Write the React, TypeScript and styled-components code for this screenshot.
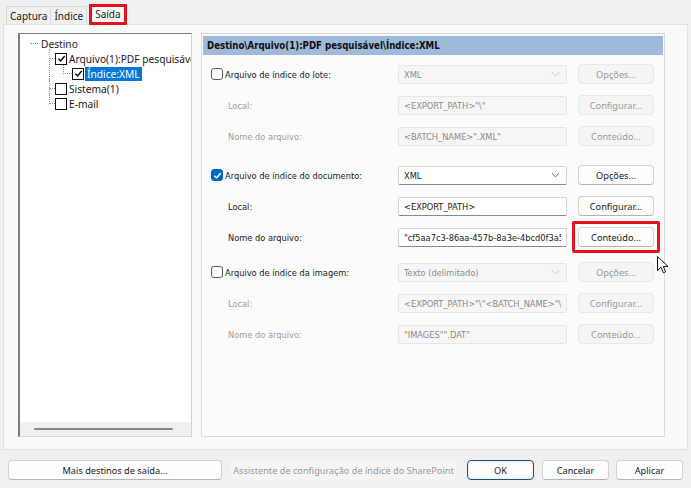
import React from "react";
import styled, { createGlobalStyle, css } from "styled-components";

const GlobalStyle = createGlobalStyle`
  html, body { margin: 0; padding: 0; background: #f0f0f0; }
  body { font-family: "Noto Sans", "Open Sans", sans-serif; font-size: 10px; color: #1a1a1a; }
  * { box-sizing: border-box; }
  ul { list-style: none; margin: 0; padding: 0; }
`;

const Window = styled.div`
  position: relative;
  width: 691px;
  height: 488px;
  display: flex;
  flex-direction: column;
  background: #f0f0f0;
  overflow: hidden;
`;

/* ---------- Tabs ---------- */
const TabStrip = styled.div`
  height: 24px;
  display: flex;
  align-items: flex-end;
  padding-left: 6px;
  position: relative;
  z-index: 2;
`;

const Tab = styled.div<{ $active?: boolean }>`
  height: 18px;
  padding: 0 3px;
  display: flex;
  align-items: center;
  font-size: 10px;
  color: #1a1a1a;
  border: 1px solid #dadada;
  border-bottom: none;
  margin-right: -1px;
  background: #f0f0f0;
  ${(p) =>
    p.$active &&
    css`
      height: 21px;
      margin: 0 0 -1px 3px;
      padding: 0 3px 1px;
      background: #f9f9f9;
      border: 3px solid #e8101c;
      border-radius: 1px;
    `}
`;

const TabPage = styled.div`
  margin: 0 3px;
  height: 426px;
  background: #f9f9f9;
  border: 1px solid #e2e2e2;
  display: grid;
  grid-template-columns: 174px 464px;
  column-gap: 9px;
  padding: 8px 0 12px 14px;
`;

/* ---------- Tree ---------- */
const TreeBox = styled.div`
  background: #ffffff;
  border: 1px solid #d4d4d4;
  border-left: 2px solid #7d7d7d;
  border-top: 1px solid #7d7d7d;
  display: flex;
  flex-direction: column;
  overflow: hidden;
`;

const TreeContent = styled.div`
  flex: 1;
  padding-top: 2px;
  overflow: hidden;
`;

const HScroll = styled.div`
  height: 14px;
  background: #f0f0f0;
  display: flex;
  align-items: center;
  padding-left: 14px;
`;

const HThumb = styled.div`
  width: 139px;
  height: 2px;
  border-radius: 1px;
  background: #878787;
`;

const RootRow = styled.div`
  height: 15px;
  display: flex;
  align-items: center;
  padding-left: 10px;
  white-space: nowrap;
  font-size: 10.2px;
`;

const RootLine = styled.span`
  width: 8px;
  border-bottom: 1px dotted #9a9a9a;
  margin-right: 3px;
`;

const NodeList = styled.ul<{ $indent: number }>`
  margin-left: ${(p) => p.$indent}px;
`;

const Node = styled.li<{ $last?: boolean; $pad: number }>`
  position: relative;
  padding-left: ${(p) => p.$pad}px;
  &::before {
    content: "";
    position: absolute;
    left: 0;
    top: -2px;
    height: ${(p) => (p.$last ? "9.5px" : "calc(100% + 2px)")};
    border-left: 1px dotted #9a9a9a;
  }
  &::after {
    content: "";
    position: absolute;
    left: 0;
    top: 7px;
    width: ${(p) => p.$pad}px;
    border-top: 1px dotted #9a9a9a;
  }
`;

const NodeRow = styled.div`
  height: 15px;
  display: flex;
  align-items: center;
  white-space: nowrap;
  font-size: 10.2px;
`;

const TreeCheck = styled.span`
  width: 12px;
  height: 12px;
  flex: none;
  border: 1.5px solid #111;
  background: #fff;
  display: inline-flex;
  align-items: center;
  justify-content: center;
  position: relative;
  z-index: 1;
`;

const NodeLabel = styled.span<{ $selected?: boolean }>`
  margin-left: ${(p) => (p.$selected ? "1px" : "2px")};
  padding: ${(p) => (p.$selected ? "0 2px" : "0")};
  line-height: 14px;
  ${(p) =>
    p.$selected &&
    css`
      background: #0078d7;
      color: #ffffff;
    `}
`;

/* ---------- Right panel ---------- */
const Panel = styled.div`
  background: #fbfbfb;
  border: 1px solid #dadada;
  padding: 2px 1px;
  display: flex;
  flex-direction: column;
  font-family: "DejaVu Sans Condensed", "DejaVu Sans", sans-serif;
  font-size: 9.2px;
`;

const PanelHeader = styled.div`
  height: 19px;
  background: #9fb9db;
  display: flex;
  align-items: center;
  padding-left: 4px;
  font-weight: bold;
  font-size: 9.6px;
  color: #0f0f0f;
`;

const Section = styled.div<{ $top: number }>`
  margin-top: ${(p) => p.$top}px;
  display: flex;
  flex-direction: column;
  gap: 11px;
`;

const Row = styled.div`
  display: grid;
  grid-template-columns: 184px 169px 76px;
  column-gap: 11px;
  align-items: center;
  height: 20px;
`;

const RowLabel = styled.div<{ $indent?: boolean; $disabled?: boolean }>`
  display: flex;
  align-items: center;
  padding-left: ${(p) => (p.$indent ? "25px" : "8px")};
  color: ${(p) => (p.$disabled ? "#9b9b9b" : "#1a1a1a")};
  white-space: nowrap;
`;

const WinCheck = styled.span<{ $checked?: boolean }>`
  width: 12px;
  height: 12px;
  margin-right: 2px;
  border-radius: 3px;
  border: 1px solid ${(p) => (p.$checked ? "#0067c0" : "#5c5c5c")};
  background: ${(p) => (p.$checked ? "#0067c0" : "#fdfdfd")};
  display: inline-flex;
  align-items: center;
  justify-content: center;
`;

const Field = styled.div<{ $disabled?: boolean }>`
  height: 19px;
  display: flex;
  align-items: center;
  padding: 0 5px;
  overflow: hidden;
  white-space: nowrap;
  border-radius: 2px;
  ${(p) =>
    p.$disabled
      ? css`
          background: #f6f6f6;
          border: 1px solid #e6e6e6;
          color: #8a8a8a;
        `
      : css`
          background: #ffffff;
          border: 1px solid #d2d2d2;
          border-bottom-color: #8a8a8a;
          color: #1a1a1a;
        `}
`;

const FieldText = styled.span`
  flex: 1;
  overflow: hidden;
`;

const Chevron = styled.svg`
  flex: none;
  margin-right: 1px;
`;

const Button = styled.button<{ $disabled?: boolean }>`
  width: 76px;
  height: 20px;
  padding: 0;
  border-radius: 4px;
  font-family: "Noto Sans", "Open Sans", sans-serif;
  font-size: 9.2px;
  cursor: default;
  ${(p) =>
    p.$disabled
      ? css`
          background: #f5f5f5;
          border: 1px solid #e8e8e8;
          color: #9a9a9a;
        `
      : css`
          background: #fdfdfd;
          border: 1px solid #d3d3d3;
          border-bottom-color: #b4b4b4;
          color: #1a1a1a;
        `}
`;

const HighlightFrame = styled.div`
  margin: -6px;
  padding: 3px;
  border: 3px solid #e8101c;
  border-radius: 2px;
  display: flex;
`;

/* ---------- Footer ---------- */
const Footer = styled.div`
  flex: 1;
  display: flex;
  align-items: flex-start;
  padding: 10px 0 0 8px;
`;

const FooterButton = styled.button<{ $w: number; $gap: number; $variant?: "default" | "disabled" }>`
  width: ${(p) => p.$w}px;
  margin-left: ${(p) => p.$gap}px;
  height: 20px;
  border-radius: 4px;
  font-family: "Noto Sans", "Open Sans", sans-serif;
  font-size: 9.2px;
  white-space: nowrap;
  padding: 0;
  background: #fdfdfd;
  border: 1px solid #d3d3d3;
  border-bottom-color: #b4b4b4;
  color: #1a1a1a;
  ${(p) =>
    p.$variant === "default" &&
    css`
      border: 1px solid #1f4f7e;
      box-shadow: inset 0 0 0 1px #e8f0f8;
    `}
  ${(p) =>
    p.$variant === "disabled" &&
    css`
      background: #f5f5f5;
      border: 1px solid #f5f5f5;
      color: #9a9a9a;
    `}
`;

const Cursor = styled.svg`
  position: absolute;
  left: 657px;
  top: 256px;
  pointer-events: none;
`;

const CheckMark = ({ color, size = 9 }: { color: string; size?: number }) => (
  <svg width={size} height={size} viewBox="0 0 10 10">
    <path d="M1.5 5.2 L4 7.6 L8.6 2.2" fill="none" stroke={color} strokeWidth="1.6" />
  </svg>
);

const ChevronDown = ({ disabled }: { disabled?: boolean }) => (
  <Chevron width="9" height="6" viewBox="0 0 9 6">
    <path d="M0.8 1 L4.5 4.8 L8.2 1" fill="none" stroke={disabled ? "#c8c8c8" : "#6a6a6a"} strokeWidth="1" />
  </Chevron>
);

type RowSpec = {
  label: string;
  kind: "check" | "sub";
  checked?: boolean;
  disabled?: boolean;
  value: string;
  select?: boolean;
  button: string;
  highlight?: boolean;
};

const sections: { top: number; rows: RowSpec[] }[] = [
  {
    top: 9,
    rows: [
      { label: "Arquivo de índice do lote:", kind: "check", value: "XML", select: true, button: "Opções...", disabled: true },
      { label: "Local:", kind: "sub", value: '<EXPORT_PATH>"\\"', button: "Configurar...", disabled: true },
      { label: "Nome do arquivo:", kind: "sub", value: '<BATCH_NAME>".XML"', button: "Conteúdo...", disabled: true },
    ],
  },
  {
    top: 19,
    rows: [
      { label: "Arquivo de índice do documento:", kind: "check", checked: true, value: "XML", select: true, button: "Opções..." },
      { label: "Local:", kind: "sub", value: "<EXPORT_PATH>", button: "Configurar..." },
      { label: "Nome do arquivo:", kind: "sub", value: '"cf5aa7c3-86aa-457b-8a3e-4bcd0f3a5f1e"', button: "Conteúdo...", highlight: true },
    ],
  },
  {
    top: 15,
    rows: [
      { label: "Arquivo de índice da imagem:", kind: "check", value: "Texto (delimitado)", select: true, button: "Opções...", disabled: true },
      { label: "Local:", kind: "sub", value: '<EXPORT_PATH>"\\"<BATCH_NAME>"\\"', button: "Configurar...", disabled: true },
      { label: "Nome do arquivo:", kind: "sub", value: '"IMAGES"".DAT"', button: "Conteúdo...", disabled: true },
    ],
  },
];

export default function App() {
  return (
    <>
      <GlobalStyle />
      <Window>
        <TabStrip>
          <Tab>Captura</Tab>
          <Tab>Índice</Tab>
          <Tab $active>Saída</Tab>
        </TabStrip>
        <TabPage>
          <TreeBox>
            <TreeContent>
              <RootRow>
                <RootLine />
                <span>Destino</span>
              </RootRow>
              <NodeList $indent={29}>
                <Node $pad={6}>
                  <NodeRow>
                    <TreeCheck>
                      <CheckMark color="#111" />
                    </TreeCheck>
                    <NodeLabel>Arquivo(1):PDF pesquisável</NodeLabel>
                  </NodeRow>
                  <NodeList $indent={8}>
                    <Node $pad={9} $last>
                      <NodeRow>
                        <TreeCheck>
                          <CheckMark color="#111" />
                        </TreeCheck>
                        <NodeLabel $selected>Índice:XML</NodeLabel>
                      </NodeRow>
                    </Node>
                  </NodeList>
                </Node>
                <Node $pad={6}>
                  <NodeRow>
                    <TreeCheck />
                    <NodeLabel>Sistema(1)</NodeLabel>
                  </NodeRow>
                </Node>
                <Node $pad={6} $last>
                  <NodeRow>
                    <TreeCheck />
                    <NodeLabel>E-mail</NodeLabel>
                  </NodeRow>
                </Node>
              </NodeList>
            </TreeContent>
            <HScroll>
              <HThumb />
            </HScroll>
          </TreeBox>

          <Panel>
            <PanelHeader>Destino\Arquivo(1):PDF pesquisável\Índice:XML</PanelHeader>
            {sections.map((s, si) => (
              <Section key={si} $top={s.top}>
                {s.rows.map((r, ri) => {
                  const btn = <Button $disabled={r.disabled}>{r.button}</Button>;
                  return (
                    <Row key={ri}>
                      <RowLabel $indent={r.kind === "sub"} $disabled={r.kind === "sub" && r.disabled}>
                        {r.kind === "check" && (
                          <WinCheck $checked={r.checked}>{r.checked && <CheckMark color="#fff" size={9} />}</WinCheck>
                        )}
                        {r.label}
                      </RowLabel>
                      <Field $disabled={r.disabled}>
                        <FieldText>{r.value}</FieldText>
                        {r.select && <ChevronDown disabled={r.disabled} />}
                      </Field>
                      {r.highlight ? <HighlightFrame>{btn}</HighlightFrame> : btn}
                    </Row>
                  );
                })}
              </Section>
            ))}
          </Panel>
        </TabPage>
        <Footer>
          <FooterButton $w={214} $gap={0}>Mais destinos de saída...</FooterButton>
          <FooterButton $w={225} $gap={9} $variant="disabled">
            Assistente de configuração de índice do SharePoint
          </FooterButton>
          <FooterButton $w={67} $gap={11} $variant="default">OK</FooterButton>
          <FooterButton $w={67} $gap={8}>Cancelar</FooterButton>
          <FooterButton $w={67} $gap={7}>Aplicar</FooterButton>
        </Footer>
        <Cursor width="12" height="18" viewBox="0 0 12 18">
          <path d="M0.5 0.5 L0.5 14.5 L4 11.2 L6.4 16.8 L8.6 15.8 L6.3 10.4 L11 10.4 Z" fill="#fff" stroke="#111" strokeWidth="1" strokeLinejoin="round" />
        </Cursor>
      </Window>
    </>
  );
}
